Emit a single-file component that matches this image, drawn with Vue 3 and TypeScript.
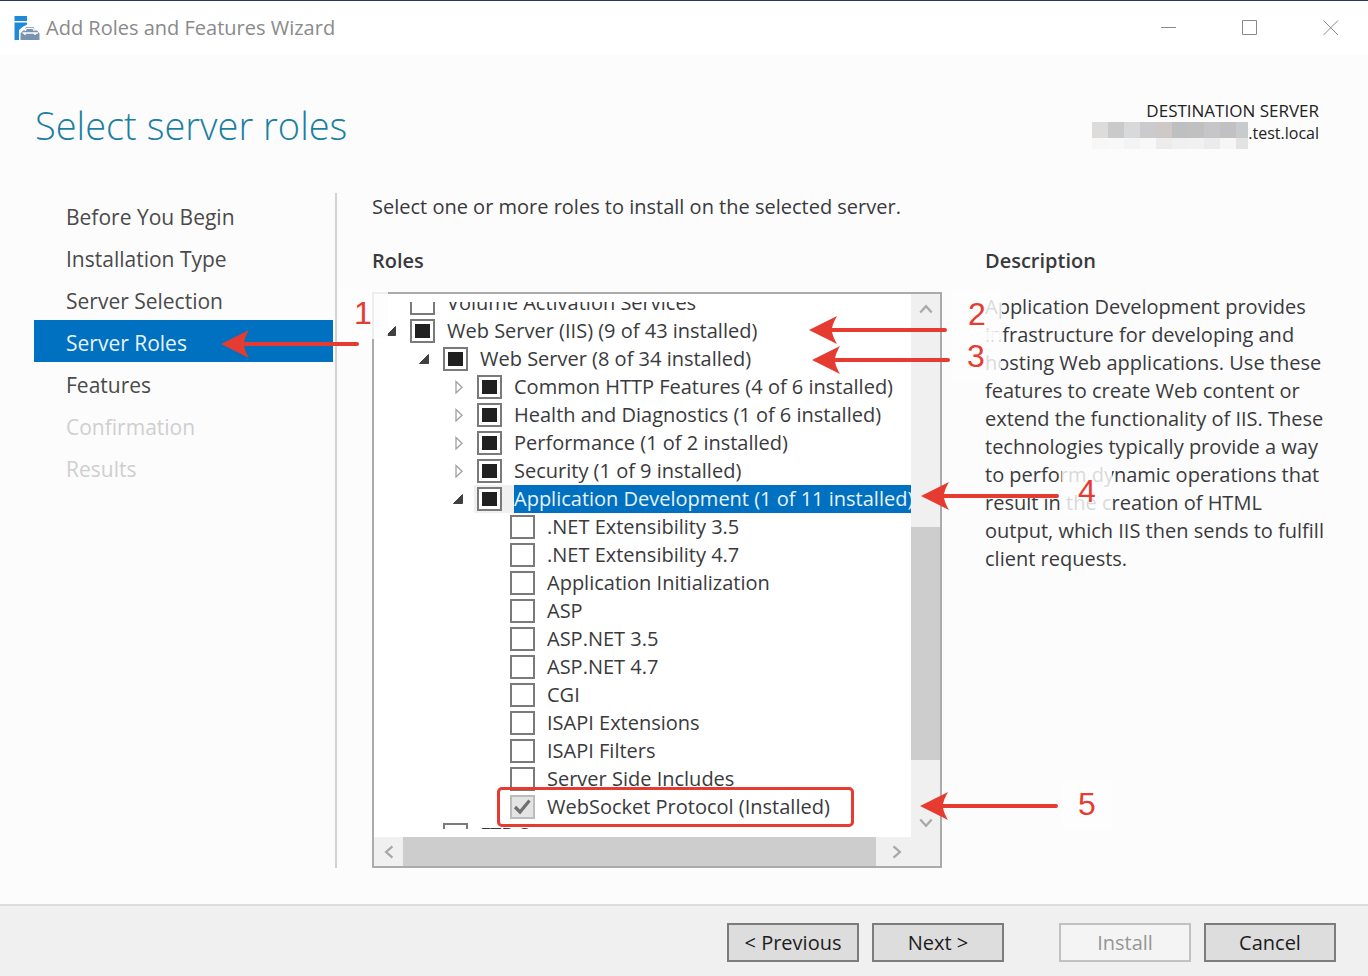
<script setup lang="ts">
import { reactive, ref } from 'vue'

type CheckState = 'none' | 'partial' | 'checked'
type Branch = 'leaf' | 'open' | 'closed'

interface RoleRow {
  id: string
  label: string
  level: number
  state: CheckState
  branch: Branch
  locked?: boolean
}

interface Step {
  label: string
  disabled?: boolean
}

const steps: Step[] = [
  { label: 'Before You Begin' },
  { label: 'Installation Type' },
  { label: 'Server Selection' },
  { label: 'Server Roles' },
  { label: 'Features' },
  { label: 'Confirmation', disabled: true },
  { label: 'Results', disabled: true },
]
const currentStep = ref('Server Roles')

const roles = reactive<RoleRow[]>([
  { id: 'volume', label: 'Volume Activation Services', level: 0, state: 'none', branch: 'leaf' },
  { id: 'iis', label: 'Web Server (IIS) (9 of 43 installed)', level: 0, state: 'partial', branch: 'open' },
  { id: 'web', label: 'Web Server (8 of 34 installed)', level: 1, state: 'partial', branch: 'open' },
  { id: 'http', label: 'Common HTTP Features (4 of 6 installed)', level: 2, state: 'partial', branch: 'closed' },
  { id: 'health', label: 'Health and Diagnostics (1 of 6 installed)', level: 2, state: 'partial', branch: 'closed' },
  { id: 'perf', label: 'Performance (1 of 2 installed)', level: 2, state: 'partial', branch: 'closed' },
  { id: 'security', label: 'Security (1 of 9 installed)', level: 2, state: 'partial', branch: 'closed' },
  { id: 'appdev', label: 'Application Development (1 of 11 installed)', level: 2, state: 'partial', branch: 'open' },
  { id: 'net35', label: '.NET Extensibility 3.5', level: 3, state: 'none', branch: 'leaf' },
  { id: 'net47', label: '.NET Extensibility 4.7', level: 3, state: 'none', branch: 'leaf' },
  { id: 'appinit', label: 'Application Initialization', level: 3, state: 'none', branch: 'leaf' },
  { id: 'asp', label: 'ASP', level: 3, state: 'none', branch: 'leaf' },
  { id: 'asp35', label: 'ASP.NET 3.5', level: 3, state: 'none', branch: 'leaf' },
  { id: 'asp47', label: 'ASP.NET 4.7', level: 3, state: 'none', branch: 'leaf' },
  { id: 'cgi', label: 'CGI', level: 3, state: 'none', branch: 'leaf' },
  { id: 'isapiext', label: 'ISAPI Extensions', level: 3, state: 'none', branch: 'leaf' },
  { id: 'isapifil', label: 'ISAPI Filters', level: 3, state: 'none', branch: 'leaf' },
  { id: 'ssi', label: 'Server Side Includes', level: 3, state: 'none', branch: 'leaf' },
  { id: 'websocket', label: 'WebSocket Protocol (Installed)', level: 3, state: 'checked', branch: 'leaf', locked: true },
  { id: 'ftp', label: 'FTP Server', level: 1, state: 'none', branch: 'leaf' },
])
const selected = ref('appdev')

const maskTop = ['#dddcda', '#cacaca', '#d8d9db', '#cbcbcd', '#cec9c7', '#bebfc0', '#c0c0c0', '#c6c6c9', '#c1c0c3', '#c8cbce']
const maskBottom = ['#f7f7f7', '#f8f8f8', '#f4f4f4', '#f8f8f8', '#ececec', '#f0f0f0', '#f1f1f1', '#ebebeb', '#f6f6f6', '#e3e3e2']

const callouts = [2, 3, 4, 5]
const arrowPath = 'M0 14 L28 0 Q24 7 23 12 H136 A2 2 0 0 1 136 16 H23 Q24 21 28 28 Z'
</script>

<template>
  <div class="window">
    <header class="titlebar">
      <svg class="app-icon" viewBox="0 0 26 26" aria-hidden="true">
        <path d="M0.500 1H13V6H0.500Z M0.500 7.500H13V9.500L8.500 12L5 15V25H0.500Z" fill="#1f8bd8" />
        <path d="M6.500 18.500L9 15.500H10.500L12 12H19.500L21 15.500H23L25.500 18.500V25H6.500Z" fill="#7a93ae" />
        <path d="M11.500 16V14.500L13 13.300H18.500L20 14.500V16" fill="none" stroke="#fff" stroke-width="1.300" />
        <path d="M8.500 18H24M11 18V20M21 18V20" fill="none" stroke="#fff" stroke-width="1.500" />
      </svg>
      <span class="title">Add Roles and Features Wizard</span>
      <div class="caption">
        <button type="button" aria-label="Minimize">
          <svg viewBox="0 0 16 16"><path d="M0 7.500H15" /></svg>
        </button>
        <button type="button" aria-label="Maximize">
          <svg viewBox="0 0 16 16"><path d="M0.500 0.500H14.500V14.500H0.500Z" /></svg>
        </button>
        <button type="button" aria-label="Close">
          <svg viewBox="0 0 16 16"><path d="M0.500 0.500L15 15M15 0.500L0.500 15" /></svg>
        </button>
      </div>
    </header>

    <section class="heading">
      <h1>Select server roles</h1>
      <div class="destination">
        <span>DESTINATION SERVER</span>
        <div class="host">
          <div class="mask">
            <i v-for="(c, i) in maskTop" :key="'t' + i" :style="{ background: c }"></i>
            <i v-for="(c, i) in maskBottom" :key="'b' + i" :style="{ background: c }"></i>
          </div>
          <span class="domain">.test.local</span>
        </div>
      </div>
    </section>

    <main class="content">
      <nav class="steps" aria-label="Wizard steps">
        <button
          v-for="s in steps"
          :key="s.label"
          type="button"
          class="step"
          :class="{ active: s.label === currentStep }"
          :disabled="s.disabled"
          @click="currentStep = s.label"
        >
          {{ s.label }}
        </button>
        <svg class="arrow arrow-1" viewBox="0 0 138 28" aria-hidden="true"><path :d="arrowPath" /></svg>
        <span class="badge badge-1">1</span>
      </nav>

      <section class="roles">
        <p class="intro">Select one or more roles to install on the selected server.</p>
        <h2>Roles</h2>
        <div class="frame">
          <div class="viewport">
            <ul class="tree">
              <li
                v-for="r in roles"
                :key="r.id"
                class="row"
                :class="['level-' + r.level, { selected: r.id === selected }]"
              >
                <button
                  v-if="r.branch !== 'leaf'"
                  type="button"
                  class="expander"
                  :aria-label="'Toggle ' + r.label"
                  @click="r.branch = r.branch === 'open' ? 'closed' : 'open'"
                >
                  <svg viewBox="0 0 12 14" aria-hidden="true">
                    <path v-if="r.branch === 'open'" d="M9.500 2.500V11.500H0.500Z" fill="#404040" stroke="#404040" />
                    <path v-else d="M3 1.500V13L9 7.200Z" fill="#fff" stroke="#a0a0a0" stroke-width="1.300" />
                  </svg>
                </button>
                <span v-else class="expander"></span>
                <span class="check">
                  <input
                    :id="'role-' + r.id"
                    type="checkbox"
                    :checked="r.state === 'checked'"
                    :indeterminate.prop="r.state === 'partial'"
                    :disabled="r.locked"
                  />
                  <svg v-if="r.state === 'checked'" viewBox="0 0 24 24" aria-hidden="true">
                    <path d="M5 12L10 17L19.500 5.500" fill="none" stroke="#707070" stroke-width="3.200" />
                  </svg>
                </span>
                <label :for="'role-' + r.id" @click="selected = r.id">{{ r.label }}</label>
              </li>
            </ul>
          </div>
          <div class="vbar">
            <button type="button" aria-label="Scroll up"><svg viewBox="0 0 14 14"><path d="M2 10L7 4.500L12 10" /></svg></button>
            <div class="vtrack"><div class="vthumb"></div></div>
            <button type="button" aria-label="Scroll down"><svg viewBox="0 0 14 14"><path d="M2 4L7 9.500L12 4" /></svg></button>
          </div>
          <div class="hbar">
            <button type="button" aria-label="Scroll left"><svg viewBox="0 0 14 14"><path d="M10 2L4.500 7L10 12" /></svg></button>
            <div class="hthumb"></div>
            <button type="button" aria-label="Scroll right"><svg viewBox="0 0 14 14"><path d="M4 2L9.500 7L4 12" /></svg></button>
          </div>
          <div class="corner"></div>

          <div class="highlight"></div>
          <template v-for="n in callouts" :key="n">
            <svg class="arrow" :class="'arrow-' + n" viewBox="0 0 138 28" aria-hidden="true"><path :d="arrowPath" /></svg>
            <span class="badge" :class="'badge-' + n">{{ n }}</span>
          </template>
        </div>
      </section>

      <aside class="description">
        <h2>Description</h2>
        <p>
          Application Development provides infrastructure for developing and hosting Web applications. Use these
          features to create Web content or extend the functionality of IIS. These technologies typically provide a way
          to perform dynamic operations that result in the creation of HTML output, which IIS then sends to fulfill
          client requests.
        </p>
      </aside>
    </main>

    <footer class="actions">
      <button type="button">&lt; Previous</button>
      <button type="button">Next &gt;</button>
      <button type="button" class="install" disabled>Install</button>
      <button type="button">Cancel</button>
    </footer>
  </div>
</template>

<style>
html,
body {
  background: #fcfcfc;
}
</style>

<style scoped>
.window {
  box-sizing: border-box;
  min-height: 100vh;
  display: flex;
  flex-direction: column;
  background: #fcfcfc;
  border-top: 1px solid #2c3b52;
  color: #3a3a3c;
  font-family: 'Open Sans', 'Noto Sans', sans-serif;
  font-size: 20px;
  line-height: 28px;
}
button {
  font: inherit;
  color: inherit;
  border: 0;
  padding: 0;
  margin: 0;
  background: none;
}
h1,
h2,
p,
ul {
  margin: 0;
  padding: 0;
  font-weight: 400;
}
.titlebar {
  display: flex;
  align-items: center;
  height: 54px;
  padding-left: 14px;
  background: #fff;
  color: #8a8a8a;
}
.app-icon {
  width: 26px;
  height: 26px;
  margin-right: 6px;
}
.title {
  flex: 1;
}
.caption {
  display: flex;
}
.caption button {
  width: 81px;
  height: 54px;
  padding-left: 6px;
  box-sizing: border-box;
  display: flex;
  align-items: center;
  justify-content: center;
}
.caption svg {
  width: 16px;
  height: 16px;
  fill: none;
  stroke: #8a8a8a;
  stroke-width: 1;
}
.heading {
  display: flex;
  justify-content: space-between;
  align-items: flex-start;
  height: 138px;
  padding: 0 49px 0 35px;
  box-sizing: border-box;
}
h1 {
  padding-top: 42px;
  font-size: 38px;
  line-height: 56px;
  font-weight: 300;
  color: #1b7fa3;
}
.destination {
  padding-top: 44px;
  display: flex;
  flex-direction: column;
  align-items: flex-end;
  font-size: 17px;
  line-height: 23px;
  color: #222;
}
.host {
  display: flex;
}
.domain {
  font-size: 16px;
}
.mask {
  display: grid;
  grid-template-columns: repeat(9, 16px) 12px;
  grid-template-rows: 16px 11px;
}
.content {
  flex: 1;
  display: flex;
  padding: 0 42px 36px 34px;
}
.steps {
  position: relative;
  width: 299px;
  padding-top: 1px;
  padding-right: 2px;
  flex: none;
  border-right: 2px solid #d2d2d2;
}
.step {
  display: block;
  width: 100%;
  height: 42px;
  padding: 3px 0 0 32px;
  text-align: left;
  font-size: 21px;
  color: #4a4a4a;
}
.step.active {
  background: #0070c0;
  color: #e8f3fb;
}
.step:disabled {
  color: #cfcfcf;
}
.roles {
  flex: 1;
  min-width: 0;
  margin-left: 35px;
  display: flex;
  flex-direction: column;
}
.intro {
  margin-bottom: 26px;
}
h2 {
  font-size: 20px;
  line-height: 28px;
  font-weight: 600;
}
.frame {
  position: relative;
  flex: 1;
  margin-top: 17px;
  border: 2px solid #ababab;
  display: grid;
  grid-template-columns: minmax(0, 1fr) 29px;
  grid-template-rows: minmax(0, 1fr) 29px;
  background: #fff;
}
.viewport {
  margin: 8px 0;
  overflow: hidden;
  height: 527px;
}
.tree {
  list-style: none;
  margin-top: -13px;
}
.row {
  display: flex;
  align-items: center;
  height: 28px;
  white-space: nowrap;
}
.level-0 {
  padding-left: 8px;
}
.level-1 {
  padding-left: 41px;
}
.level-2 {
  padding-left: 75px;
}
.level-3 {
  padding-left: 108px;
}
.expander {
  flex: none;
  display: flex;
  align-items: center;
  width: 28px;
  height: 28px;
  padding-left: 4px;
  box-sizing: border-box;
}
.expander svg {
  width: 12px;
  height: 14px;
}
.check {
  position: relative;
  flex: none;
  display: flex;
  align-items: center;
  height: 28px;
  padding-right: 12px;
}
.check input {
  appearance: none;
  width: 25px;
  height: 24px;
  margin: 0;
  border: 2px solid #7a7a7a;
  background: #fff;
}
.check input:indeterminate {
  background: linear-gradient(#202020, #202020) center / 15px 14px no-repeat #fff;
}
.check input:disabled {
  border-color: #bcbcbc;
  background: #e4e4e4;
}
.check svg {
  position: absolute;
  left: 0;
  top: 2px;
  width: 24px;
  height: 24px;
}
.selected .check {
  box-shadow: -3px 0 0 #f0f0f0;
  background: #f0f0f0;
}
.row label {
  flex: 1;
}
.selected label {
  background: #0070c0;
  color: #e8f3fb;
}
.vbar {
  display: flex;
  flex-direction: column;
  background: #f0f0f0;
}
.vbar button,
.hbar button {
  flex: none;
  width: 29px;
  height: 29px;
  display: flex;
  align-items: center;
  justify-content: center;
}
.frame button svg {
  flex: none;
}
.vbar svg,
.hbar svg {
  width: 16px;
  height: 16px;
  fill: none;
  stroke: #a8a8a8;
  stroke-width: 2;
}
.vtrack {
  flex: 1;
  display: flex;
  flex-direction: column;
  justify-content: flex-end;
  padding-bottom: 48px;
}
.vthumb {
  height: 233px;
  background: #cdcdcd;
}
.hbar {
  display: flex;
  background: #f0f0f0;
}
.hthumb {
  flex: 1;
  margin-right: 6px;
  background: #cdcdcd;
}
.corner {
  background: #f0f0f0;
}
.description {
  width: 341px;
  flex: none;
  margin-left: 43px;
  padding-top: 54px;
}
.description p {
  margin-top: 18px;
}
.actions {
  display: flex;
  justify-content: flex-end;
  gap: 14px;
  height: 72px;
  box-sizing: border-box;
  padding: 17px 32px 0;
  border-top: 2px solid #dcdcdc;
  background: #f0f0f0;
}
.actions button {
  width: 132px;
  height: 39px;
  border: 2px solid #7c7c7c;
  background: #dddddd;
  color: #1c1c1c;
}
.actions button + button {
  margin-left: -1px;
}
.actions button.install {
  margin-left: 41px;
  border-color: #bfc1c4;
  background: #f4f4f4;
  color: #969696;
}

/* numbered callouts drawn over the dialog */
.arrow {
  position: absolute;
  z-index: 2;
  width: 138px;
  height: 28px;
  fill: #e53b30;
}
.badge {
  position: absolute;
  z-index: 1;
  width: 50px;
  height: 50px;
  background: rgba(253, 253, 253, 0.82);
  color: #e53b30;
  font-family: 'Liberation Sans', sans-serif;
  font-size: 32px;
  line-height: 48px;
  text-align: center;
}
.arrow-1 {
  left: 187px;
  top: 137px;
}
.badge-1 {
  left: 304px;
  top: 96px;
}
.arrow-2 {
  right: -7px;
  top: 22px;
}
.badge-2 {
  right: -62px;
  top: -4px;
}
.arrow-3 {
  right: -10px;
  top: 52px;
}
.badge-3 {
  right: -61px;
  top: 38px;
}
.arrow-4 {
  right: -119px;
  top: 188px;
}
.badge-4 {
  right: -172px;
  top: 173px;
}
.arrow-5 {
  right: -118px;
  top: 498px;
}
.badge-5 {
  right: -172px;
  top: 486px;
}
.highlight {
  position: absolute;
  left: 123px;
  top: 493px;
  width: 357px;
  height: 40px;
  box-sizing: border-box;
  border: 3px solid #e53b30;
  border-radius: 5px;
}
</style>
